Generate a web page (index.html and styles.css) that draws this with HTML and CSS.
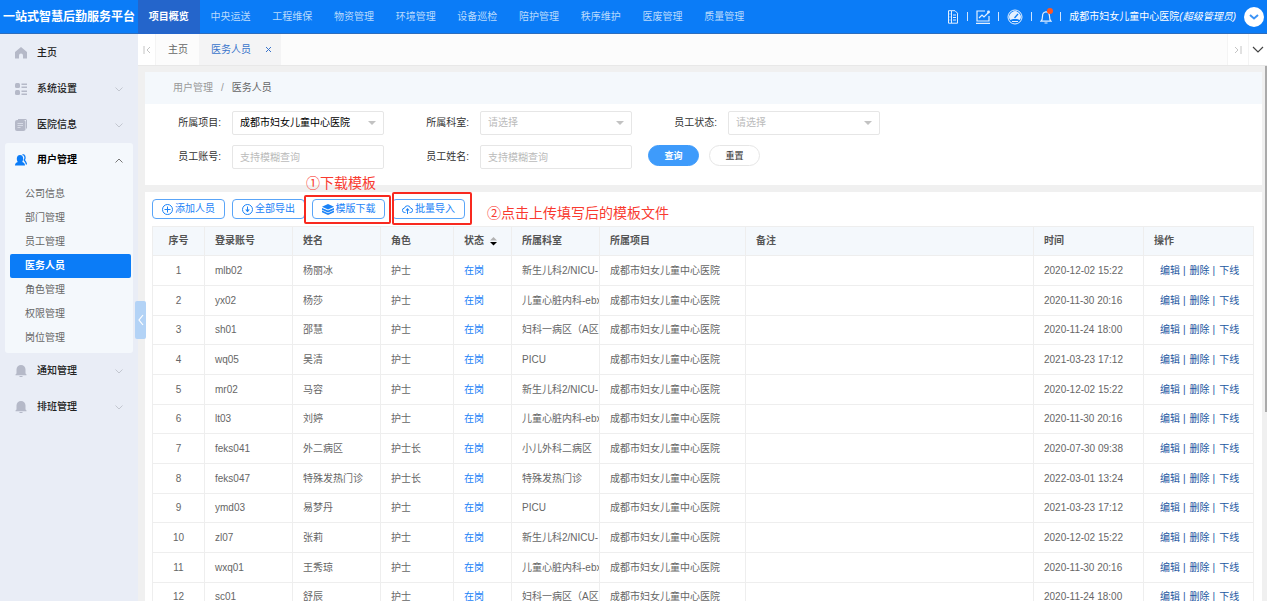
FILE: index.html
```html
<!DOCTYPE html>
<html lang="zh-CN">
<head>
  <meta charset="UTF-8" />
  <meta name="viewport" content="width=device-width, initial-scale=1.0" />
  <title>一站式智慧后勤服务平台</title>
  <link rel="stylesheet" href="styles.css">
</head>
<body>
  <header class="header">
    <h1 class="logo">一站式智慧后勤服务平台</h1>
    <nav class="top-nav">
      <a href="#" class="active">项目概览</a>
      <a href="#">中央运送</a>
      <a href="#">工程维保</a>
      <a href="#">物资管理</a>
      <a href="#">环境管理</a>
      <a href="#">设备巡检</a>
      <a href="#">陪护管理</a>
      <a href="#">秩序维护</a>
      <a href="#">医废管理</a>
      <a href="#">质量管理</a>
    </nav>
    <div class="tools">
      <button class="tool" aria-label="文档">
        <svg width="12" height="14" viewBox="0 0 12 14" fill="none" stroke="currentColor"><path d="M1.500 .7h6.500l2.500 2.500v10h-9zM4.500 1v12M6 5h3M6 7.500h3M6 10h3M2.500 4h1M2.500 7h1M2.500 10h1"/></svg>
      </button>
      <span class="sep"></span>
      <button class="tool" aria-label="统计">
        <svg width="14" height="14" viewBox="0 0 14 14" fill="none" stroke="currentColor" stroke-width="1.200"><path d="M9 1H1v10h12V6M0 13.300h14M3 8l3-3 2 2 5-5"/><circle cx="12.500" cy="2" r="0.800" fill="currentColor"/></svg>
      </button>
      <span class="sep"></span>
      <button class="tool" aria-label="仪表盘">
        <svg width="16" height="16" viewBox="0 0 16 16"><circle cx="8" cy="8" r="7" fill="none" stroke="currentColor"/><path d="M3 11A5.800 5.800 0 1 1 13 11L10 10H6z" fill="currentColor"/><path d="M7.500 9L11 5" stroke="#0b7cf7" stroke-width="1.300"/><path d="M5 12.500h6" stroke="currentColor"/></svg>
      </button>
      <span class="sep"></span>
      <button class="tool bell" aria-label="消息">
        <svg width="12" height="14" viewBox="0 0 12 14" fill="none" stroke="currentColor" stroke-width="1.200"><path d="M1 11.200h10c-1.300-1.200-1.500-2-1.500-5C9.500 3.500 8 2 6 2S2.500 3.500 2.500 6.200c0 3-.2 3.800-1.500 5zM4.500 13h3M6 2V1"/></svg>
      </button>
      <span class="sep"></span>
      <span class="user">成都市妇女儿童中心医院<em>(超级管理员)</em></span>
      <button class="user-toggle" aria-label="展开">
        <svg width="10" height="6" viewBox="0 0 10 6" fill="none" stroke="currentColor" stroke-width="2"><path d="M1 1l4 3.500L9 1"/></svg>
      </button>
    </div>
  </header>

  <div class="body">
    <aside class="sidebar">
      <a href="#" class="menu-item">
        <svg class="icon" viewBox="0 0 12 12"><path d="M6 0L0 5v6.500h4V8.500a2 2 0 0 1 4 0v3h4V5z" fill="currentColor"/></svg>
        主页
      </a>
      <a href="#" class="menu-item">
        <svg class="icon" viewBox="0 0 12 12" fill="currentColor"><rect width="5" height="5" rx="1.500"/><rect y="7" width="5" height="5" rx="1.500"/><path d="M6.500 .5H12V2H6.500zM6.500 3.500H12V5H6.500zM6.500 7.500H12V9H6.500zM6.500 10.500H12V12H6.500z"/></svg>
        系统设置
        <svg class="arrow" viewBox="0 0 8 5"><path d="M.5 .5L4 4 7.500 .5"/></svg>
      </a>
      <a href="#" class="menu-item">
        <svg class="icon" viewBox="0 0 12 12"><path d="M3 0h7.500A1.500 1.500 0 0 1 12 1.500V9l-1 1V1H3z" fill="currentColor"/><rect y="1" width="10.500" height="11" rx="2" fill="currentColor"/><path d="M2.500 4.500h5.500M2.500 6.500h5.500M2.500 8.500h3" stroke="#d6dae5"/></svg>
        医院信息
        <svg class="arrow" viewBox="0 0 8 5"><path d="M.5 .5L4 4 7.500 .5"/></svg>
      </a>
      <div class="menu-group">
        <a href="#" class="menu-item open">
          <svg class="icon" viewBox="0 0 12 12"><path d="M0 11.500c0-2 1-2.800 2.800-3.500C1.300 6 1.200 1 5 1s3.700 5 2.200 7C9 8.700 10 9.500 10 11.500z" fill="currentColor"/><path d="M7.500 .7c2.500 0 3.200 3.300 1.700 5.300 1.300 1.500 2 2.700 2.300 4.500" fill="none" stroke="currentColor" stroke-width="1.300"/></svg>
          用户管理
          <svg class="arrow" viewBox="0 0 8 5"><path d="M.5 4.500L4 1l3.500 3.500"/></svg>
        </a>
        <nav class="submenu">
          <a href="#">公司信息</a>
          <a href="#">部门管理</a>
          <a href="#">员工管理</a>
          <a href="#" class="active">医务人员</a>
          <a href="#">角色管理</a>
          <a href="#">权限管理</a>
          <a href="#">岗位管理</a>
        </nav>
      </div>
      <a href="#" class="menu-item">
        <svg class="icon" viewBox="0 0 12 12" fill="currentColor"><path d="M.5 10.200V9.500l1-1V4.500a4.500 4.500 0 0 1 9 0v4l1 1v.7zM4 11h4l-1 1H5z"/></svg>
        通知管理
        <svg class="arrow" viewBox="0 0 8 5"><path d="M.5 .5L4 4 7.500 .5"/></svg>
      </a>
      <a href="#" class="menu-item">
        <svg class="icon" viewBox="0 0 12 12" fill="currentColor"><path d="M.5 10.200V9.500l1-1V4.500a4.500 4.500 0 0 1 9 0v4l1 1v.7zM4 11h4l-1 1H5z"/></svg>
        排班管理
        <svg class="arrow" viewBox="0 0 8 5"><path d="M.5 .5L4 4 7.500 .5"/></svg>
      </a>
      <button class="collapse" aria-label="收起菜单">
        <svg width="6" height="12" viewBox="0 0 6 12" fill="none" stroke="#fff" stroke-width="1.200"><path d="M5 1L1 6l4 5"/></svg>
      </button>
    </aside>

    <main class="main">
      <div class="tabs">
        <button class="tab-scroll" aria-label="向左">
          <svg width="8" height="8" viewBox="0 0 8 8" fill="none" stroke="#c4c4c4"><path d="M1 0v8M7 1L4 4l3 3"/></svg>
        </button>
        <a href="#" class="tab">主页</a>
        <a href="#" class="tab active">医务人员
          <svg width="7" height="7" viewBox="0 0 7 7" fill="none" stroke="currentColor"><path d="M1 1l5 5M6 1L1 6"/></svg>
        </a>
        <button class="tab-scroll right" aria-label="向右">
          <svg width="8" height="8" viewBox="0 0 8 8" fill="none" stroke="#c4c4c4"><path d="M7 0v8M1 1l3 3-3 3"/></svg>
        </button>
        <button class="tab-more" aria-label="更多">
          <svg width="12" height="7" viewBox="0 0 12 7" fill="none" stroke="#444" stroke-width="1.200"><path d="M1 1l5 5 5-5"/></svg>
        </button>
      </div>

      <div class="content">
        <section class="panel">
          <div class="breadcrumb"><a href="#">用户管理</a><span>/</span><b>医务人员</b></div>
          <form class="search">
            <div class="field">
              <label for="project">所属项目:</label>
              <div class="select"><select id="project" class="filled"><option>成都市妇女儿童中心医院</option></select></div>
            </div>
            <div class="field">
              <label for="dept">所属科室:</label>
              <div class="select"><select id="dept"><option>请选择</option></select></div>
            </div>
            <div class="field">
              <label for="state">员工状态:</label>
              <div class="select"><select id="state"><option>请选择</option></select></div>
            </div>
            <div class="field">
              <label for="account">员工账号:</label>
              <input id="account" type="text" placeholder="支持模糊查询">
            </div>
            <div class="field">
              <label for="name">员工姓名:</label>
              <input id="name" type="text" placeholder="支持模糊查询">
            </div>
            <div class="form-btns">
              <button type="button" class="round primary">查询</button>
              <button type="reset" class="round">重置</button>
            </div>
          </form>
        </section>

        <section class="panel list">
          <div class="toolbar">
            <button class="btn">
              <svg width="11" height="11" viewBox="0 0 11 11" fill="none" stroke="currentColor"><circle cx="5.500" cy="5.500" r="5"/><path d="M5.500 2.500v6M2.500 5.500h6"/></svg>添加人员
            </button>
            <button class="btn">
              <svg width="11" height="11" viewBox="0 0 11 11" fill="none" stroke="currentColor"><circle cx="5.500" cy="5.500" r="5"/><path d="M5.500 2.500v5"/><path d="M3.200 5.500h4.600L5.500 8.300z" fill="currentColor" stroke="none"/></svg>全部导出
            </button>
            <div class="step step-one">
              <span class="note">①下载模板</span>
              <button class="btn">
                <svg width="12" height="11" viewBox="0 0 12 11" fill="currentColor"><path d="M6 0l6 2.700-6 2.700L0 2.700z"/><path d="M0 3.900l6 2.700 6-2.700v1.800L6 8.400 0 5.700zM0 6.600l6 2.700 6-2.700v1.700L6 11 0 8.300z"/></svg>模版下载
              </button>
            </div>
            <div class="step step-two">
              <button class="btn">
                <svg width="11" height="11" viewBox="0 0 11 11" fill="none" stroke="currentColor"><path d="M3.500 8.500H2.800a2.200 2.200 0 0 1-.3-4.400 3.100 3.100 0 0 1 6 0 2.200 2.200 0 0 1-.3 4.400h-.7M5.500 10V6"/><path d="M3.300 6.500L5.500 4l2.200 2.500z" fill="currentColor" stroke="none"/></svg>批量导入
              </button>
              <span class="note">②点击上传填写后的模板文件</span>
            </div>
          </div>

          <table class="table">
            <colgroup>
              <col class="w-no"><col class="w-md"><col class="w-md"><col class="w-role"><col class="w-state">
              <col class="w-md"><col class="w-project"><col><col class="w-time"><col class="w-time">
            </colgroup>
            <thead>
              <tr>
                <th>序号</th>
                <th>登录账号</th>
                <th>姓名</th>
                <th>角色</th>
                <th>状态<svg class="sort" width="7" height="9" viewBox="0 0 7 9"><path d="M0 3.500L3.500 0 7 3.500z" fill="#b2b2b2"/><path d="M0 5h7L3.500 8.500z" fill="#000"/></svg></th>
                <th>所属科室</th>
                <th>所属项目</th>
                <th>备注</th>
                <th>时间</th>
                <th>操作</th>
              </tr>
            </thead>
            <tbody id="rows"></tbody>
          </table>
        </section>
      </div>
      <div class="scroll-thumb"></div>
    </main>
  </div>

  <script>
    const staff = [
      ['mlb02', '杨丽冰', '护士', '新生儿科2/NICU-', '2020-12-02 15:22'],
      ['yx02', '杨莎', '护士', '儿童心脏内科-ebx', '2020-11-30 20:16'],
      ['sh01', '邵慧', '护士', '妇科一病区（A区', '2020-11-24 18:00'],
      ['wq05', '吴清', '护士', 'PICU', '2021-03-23 17:12'],
      ['mr02', '马容', '护士', '新生儿科2/NICU-', '2020-12-02 15:22'],
      ['lt03', '刘婷', '护士', '儿童心脏内科-ebx', '2020-11-30 20:16'],
      ['feks041', '外二病区', '护士长', '小儿外科二病区', '2020-07-30 09:38'],
      ['feks047', '特殊发热门诊', '护士长', '特殊发热门诊', '2022-03-01 13:24'],
      ['ymd03', '易梦丹', '护士', 'PICU', '2021-03-23 17:12'],
      ['zl07', '张莉', '护士', '新生儿科2/NICU-', '2020-12-02 15:22'],
      ['wxq01', '王秀琼', '护士', '儿童心脏内科-ebx', '2020-11-30 20:16'],
      ['sc01', '舒辰', '护士', '妇科一病区（A区', '2020-11-24 18:00']
    ];

    document.getElementById('rows').innerHTML = staff.map(([account, name, role, dept, time], i) => `
      <tr>
        <td>${i + 1}</td>
        <td>${account}</td>
        <td>${name}</td>
        <td>${role}</td>
        <td class="on">在岗</td>
        <td>${dept}</td>
        <td>成都市妇女儿童中心医院</td>
        <td></td>
        <td>${time}</td>
        <td class="actions"><a href="#">编辑</a><a href="#">删除</a><a href="#">下线</a></td>
      </tr>`).join('');
  </script>
</body>
</html>
```
FILE: styles.css
```css
* {
  box-sizing: border-box;
}
body {
  margin: 0;
  height: 100vh;
  overflow: hidden;
  display: flex;
  flex-direction: column;
  background: #f0f0f0;
  color: #666;
  font: 10px/20px 'Liberation Sans', 'Noto Sans CJK SC', sans-serif;
}
a {
  color: inherit;
  text-decoration: none;
}
button, input, select {
  font: inherit;
  margin: 0;
}
button {
  cursor: pointer;
  border: none;
  background: none;
  padding: 0;
}
svg {
  flex: none;
}

/* Header */
.header {
  flex: none;
  height: 34px;
  display: flex;
  background: #0b7cf7;
  border-bottom: 1px solid #2c6dbd;
  color: #fff;
}
.logo {
  flex: none;
  width: 138px;
  margin: 0;
  padding-left: 3px;
  font-size: 12px;
  line-height: 34px;
  white-space: nowrap;
}
.top-nav {
  display: grid;
  grid-template-columns: repeat(10, 1fr);
  width: 617px;
  line-height: 34px;
  text-align: center;
  color: #b9dafd;
}
.top-nav .active {
  background: #2465cb;
  color: #fff;
  font-weight: bold;
}
.tools {
  display: flex;
  align-items: center;
  gap: 8px;
  margin-left: auto;
  padding-right: 3px;
}
.tool {
  display: flex;
  color: #e3f0ff;
}
.bell {
  position: relative;
}
.bell::after {
  content: '';
  position: absolute;
  top: -2px;
  right: -1px;
  width: 6px;
  height: 6px;
  border-radius: 50%;
  background: #ff5722;
}
.sep {
  width: 1px;
  height: 9px;
  background: #cfe4fd;
}
.user {
  white-space: nowrap;
}
.user-toggle {
  display: flex;
  align-items: center;
  justify-content: center;
  width: 20px;
  height: 20px;
  border-radius: 50%;
  background: #fff;
  color: #3c93f5;
}

/* Sidebar */
.body {
  flex: 1;
  min-height: 0;
  display: flex;
}
.sidebar {
  position: relative;
  z-index: 1;
  flex: none;
  width: 138px;
  padding: 1px 5px 0;
  background: #e9edf6;
}
.menu-item {
  display: flex;
  align-items: center;
  height: 36px;
  padding: 0 10px;
  color: #222;
  font-weight: 500;
}
.menu-item .icon {
  width: 12px;
  height: 12px;
  margin-right: 10px;
  color: #b5b9c8;
}
.menu-item .arrow {
  width: 8px;
  height: 5px;
  margin-left: auto;
  fill: none;
  stroke: #c3c7d0;
}
.menu-group {
  padding-bottom: 3px;
  border-radius: 3px;
  background: #f4f8fc;
}
.menu-item.open {
  height: 34px;
  color: #000;
  font-weight: bold;
}
.open .icon {
  color: #0b7cf7;
}
.open .arrow {
  stroke: #777;
}
.submenu {
  padding: 5px 2px 0 5px;
}
.submenu a {
  display: block;
  padding-left: 15px;
  line-height: 24px;
}
.submenu .active {
  border-radius: 2px;
  background: #0b7cf7;
  color: #fff;
  font-weight: bold;
}
.collapse {
  position: absolute;
  top: 267px;
  right: -8px;
  display: flex;
  align-items: center;
  justify-content: center;
  width: 11px;
  height: 38px;
  border-radius: 2px;
  background: #b3d3f6;
}

/* Tabs */
.main {
  position: relative;
  flex: 1;
  min-width: 0;
}
.tabs {
  display: flex;
  height: 32px;
  border-bottom: 1px solid #e8e8e8;
  background: #fcfcfc;
  line-height: 32px;
}
.tab {
  display: flex;
  align-items: center;
  padding: 0 11px 0 12px;
}
.tab.active {
  gap: 14px;
  padding-right: 9px;
  background: #f4f4f5;
  color: #3a74cb;
}
.tab-scroll, .tab-more {
  display: flex;
  align-items: center;
  justify-content: center;
  width: 18px;
  background: #fff;
  border-right: 1px solid #f4f4f4;
}
.tab-scroll.right {
  width: 22px;
  margin-left: auto;
  border-left: 1px solid #f4f4f4;
}
.tab-more {
  border: none;
}

/* Content */
.content {
  padding: 6px 5px 0 7px;
}
.panel {
  margin-bottom: 7px;
  background: #fff;
}
.breadcrumb {
  height: 32px;
  padding-left: 28px;
  line-height: 31px;
  background: #f4f8fc;
  color: #999;
}
.breadcrumb span {
  margin: 0 8px;
}
.breadcrumb b {
  color: #666;
  font-weight: normal;
}
.search {
  display: grid;
  grid-template-columns: repeat(3, 239px);
  gap: 10px 9px;
  padding: 7px 0 16px;
}
.field {
  display: flex;
}
.field label {
  width: 87px;
  padding-right: 11px;
  line-height: 24px;
  text-align: right;
  color: #333;
}
.field input, .field select {
  width: 152px;
  height: 24px;
  padding: 0 7px;
  border: 1px solid #e6e6e6;
  border-radius: 2px;
  background: #fff;
  color: #bbb;
  outline: none;
}
.field select {
  appearance: none;
}
.field select.filled {
  color: #000;
}
.field input::placeholder {
  color: #bbb;
}
.select {
  position: relative;
}
.select::after {
  content: '';
  position: absolute;
  top: 10px;
  right: 8px;
  border: 4px solid transparent;
  border-top-color: #c2c2c2;
  border-bottom: none;
  pointer-events: none;
}
.form-btns {
  display: flex;
  gap: 10px;
  padding-left: 7px;
}
.round {
  width: 51px;
  height: 21px;
  border: 1px solid #e6e6e6;
  border-radius: 11px;
  background: #fff;
  color: #444;
  font-size: 9px;
  font-weight: 500;
}
.round.primary {
  border-color: #3e9bfb;
  background: #3e9bfb;
  color: #fff;
  font-weight: bold;
}

/* List */
.list {
  padding: 7px 8px 0 7px;
}
.toolbar {
  display: flex;
  gap: 7px;
  margin-bottom: 7px;
}
.btn {
  display: flex;
  align-items: center;
  justify-content: center;
  gap: 2px;
  width: 73px;
  height: 20px;
  border: 1px solid #5aa5f8;
  border-radius: 4px;
  background: #fff;
  color: #1a82f7;
  line-height: 18px;
  white-space: nowrap;
}
.step {
  position: relative;
}
/* red frame round the button of each step */
.step::after {
  content: '';
  position: absolute;
  inset: -4px -6px -5px -8px;
  border: 2px solid #f8291f;
  border-radius: 2px;
  pointer-events: none;
}
.step-two::after {
  inset: -7px -7px -6px 0;
}
.note {
  position: absolute;
  color: #f93a30;
  font-size: 14px;
  white-space: nowrap;
}
.step-one .note {
  left: -6px;
  bottom: 26px;
}
.step-two .note {
  left: 95px;
  top: 4px;
}
.table {
  width: 100%;
  table-layout: fixed;
  border-collapse: collapse;
}
.w-no { width: 52px; }
.w-md { width: 88px; }
.w-role { width: 73px; }
.w-state { width: 58px; }
.w-project { width: 146px; }
.w-time { width: 110px; }
.table th, .table td {
  height: 30px;
  padding: 0 0 0 10px;
  border: 1px solid #eee;
  overflow: hidden;
  white-space: nowrap;
  text-align: left;
}
.table th, .table tr:nth-child(3n) td {
  height: 29px;
}
.table th {
  background: #f4f8fc;
  color: #555;
}
.table th:first-child, .table td:first-child {
  padding: 0;
  text-align: center;
}
.sort {
  margin-left: 6px;
  vertical-align: middle;
}
.table .on {
  color: #1a82f7;
}
.table .actions {
  padding-left: 16px;
  color: #1c579f;
}
.actions a + a::before {
  content: '|';
  margin: 0 4px 0 3px;
}

/* Thumb of the page scroll bar */
.scroll-thumb {
  position: absolute;
  top: 32px;
  right: 0;
  width: 2px;
  height: 61%;
  background: #aaa;
}
```
